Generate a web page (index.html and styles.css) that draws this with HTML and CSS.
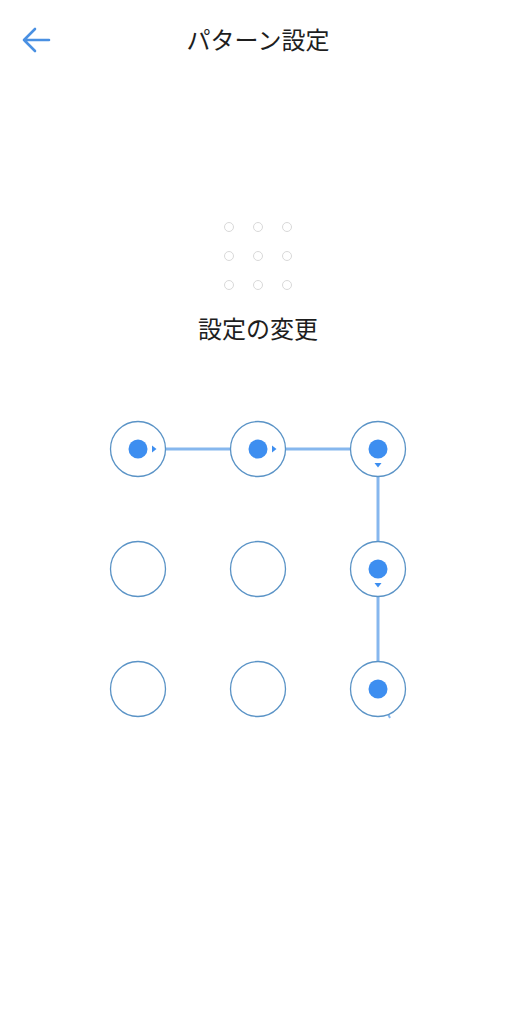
FILE: index.html
```html
<!DOCTYPE html>
<html lang="ja">
<head>
<meta charset="utf-8">
<title>パターン設定</title>
<link rel="stylesheet" href="styles.css">
</head>
<body>
<div class="page">
  <header class="header">
    <div class="header-left">
      <svg class="back" width="30" height="28" viewBox="0 0 30 28" aria-label="戻る">
        <path d="M28 14 H3 M14 3 L3 14 L14 25" fill="none" stroke="#4a90e2" stroke-width="2.6" stroke-linecap="round" stroke-linejoin="round"/>
      </svg>
    </div>
    <h1 class="title">パターン設定</h1>
    <div class="header-right"></div>
  </header>

  <div class="mini-grid">
    <span class="mini"></span><span class="mini"></span><span class="mini"></span>
    <span class="mini"></span><span class="mini"></span><span class="mini"></span>
    <span class="mini"></span><span class="mini"></span><span class="mini"></span>
  </div>

  <p class="subtitle">設定の変更</p>

  <svg class="pattern" width="300" height="300" viewBox="0 0 300 300">
    <g stroke="#86b7ee" stroke-width="3" fill="none">
      <line x1="58" y1="30" x2="122" y2="30"/>
      <line x1="178" y1="30" x2="242" y2="30"/>
      <line x1="270" y1="58" x2="270" y2="122"/>
      <line x1="270" y1="178" x2="270" y2="242"/>
      <line x1="280" y1="295" x2="282" y2="299" stroke-width="2"/>
    </g>
    <g fill="#fff" stroke="#5a93c6" stroke-width="1.3">
      <circle cx="30" cy="30" r="27.5"/>
      <circle cx="150" cy="30" r="27.5"/>
      <circle cx="270" cy="30" r="27.5"/>
      <circle cx="30" cy="150" r="27.5"/>
      <circle cx="150" cy="150" r="27.5"/>
      <circle cx="270" cy="150" r="27.5"/>
      <circle cx="30" cy="270" r="27.5"/>
      <circle cx="150" cy="270" r="27.5"/>
      <circle cx="270" cy="270" r="27.5"/>
    </g>
    <g fill="#3d8ef0">
      <circle cx="30" cy="30" r="9.5"/>
      <circle cx="150" cy="30" r="9.5"/>
      <circle cx="270" cy="30" r="9.5"/>
      <circle cx="270" cy="150" r="9.5"/>
      <circle cx="270" cy="270" r="9.5"/>
      <polygon points="44,26.5 48.5,30 44,33.5"/>
      <polygon points="164,26.5 168.5,30 164,33.5"/>
      <polygon points="266.5,44 273.5,44 270,48.5"/>
      <polygon points="266.5,164 273.5,164 270,168.5"/>
    </g>
  </svg>
</div>
</body>
</html>
```

FILE: styles.css
```css
* { box-sizing: border-box; }
html, body {
  margin: 0;
  padding: 0;
  background: #fff;
}
body {
  font-family: "Noto Sans CJK JP", "Noto Sans", sans-serif;
  color: #1e1e1e;
}
.page {
  width: 516px;
  min-height: 1024px;
  display: flex;
  flex-direction: column;
  align-items: center;
}
.header {
  width: 100%;
  height: 80px;
  display: grid;
  grid-template-columns: 1fr auto 1fr;
  align-items: center;
}
.header-left {
  padding-left: 21px;
  display: flex;
  align-items: center;
}
.back { display: block; }
.title {
  margin: 0 0 2px;
  font-size: 24px;
  font-weight: 400;
  line-height: 32px;
}
.mini-grid {
  margin-top: 142px;
  display: grid;
  grid-template-columns: repeat(3, 10px);
  grid-auto-rows: 10px;
  gap: 19px;
}
.mini {
  width: 10px;
  height: 10px;
  border-radius: 50%;
  border: 1.5px solid #d9d9d9;
}
.subtitle {
  margin: 22px 0 0;
  font-size: 24px;
  line-height: 32px;
  font-weight: 400;
}
.pattern {
  display: block;
  margin-top: 75px;
}
```
